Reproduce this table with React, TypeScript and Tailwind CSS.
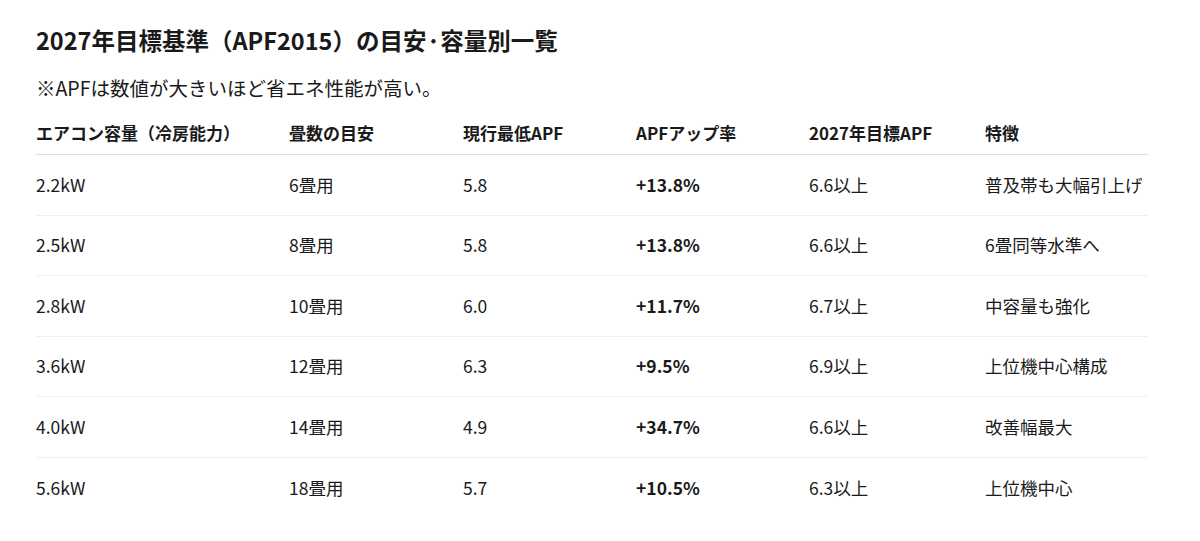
const rows = [
  { cap: '2.2kW', tatami: '6畳用', now: '5.8', up: '+13.8%', target: '6.6以上', note: '普及帯も大幅引上げ' },
  { cap: '2.5kW', tatami: '8畳用', now: '5.8', up: '+13.8%', target: '6.6以上', note: '6畳同等水準へ' },
  { cap: '2.8kW', tatami: '10畳用', now: '6.0', up: '+11.7%', target: '6.7以上', note: '中容量も強化' },
  { cap: '3.6kW', tatami: '12畳用', now: '6.3', up: '+9.5%', target: '6.9以上', note: '上位機中心構成' },
  { cap: '4.0kW', tatami: '14畳用', now: '4.9', up: '+34.7%', target: '6.6以上', note: '改善幅最大' },
  { cap: '5.6kW', tatami: '18畳用', now: '5.7', up: '+10.5%', target: '6.3以上', note: '上位機中心' },
];

const headers = ['エアコン容量（冷房能力）', '畳数の目安', '現行最低APF', 'APFアップ率', '2027年目標APF', '特徴'];

const grid = 'grid grid-cols-[253px_174px_173px_173px_176px_163px]';

export default function App() {
  return (
    <div
      className="w-[1200px] h-[541px] bg-white text-[#1a1a1a] px-[36px] pt-[24px]"
      style={{ fontFamily: '"Noto Sans CJK JP", "Noto Sans", sans-serif' }}
    >
      <h1 className="text-[23.5px] leading-[32px] font-bold">2027年目標基準（APF2015）の目安·容量別一覧</h1>
      <p className="mt-[18px] text-[19.5px] leading-[28px]">※APFは数値が大きいほど省エネ性能が高い。</p>

      <div className="mt-[10px] w-[1112px]">
        {/* header */}
        <div className={`${grid} h-[43px] items-center border-b border-[#dcdcdc] text-[17px] font-bold`}>
          {headers.map(h => (
            <div key={h}>{h}</div>
          ))}
        </div>

        {rows.map((r, i) => (
          <div
            key={r.cap}
            className={`${grid} h-[60.5px] items-center text-[17.5px] ${i < rows.length - 1 ? 'border-b border-[#efefef]' : ''}`}
          >
            <div>{r.cap}</div>
            <div>{r.tatami}</div>
            <div>{r.now}</div>
            <div className="font-bold">{r.up}</div>
            <div>{r.target}</div>
            <div className="whitespace-nowrap">{r.note}</div>
          </div>
        ))}
      </div>
    </div>
  );
}
